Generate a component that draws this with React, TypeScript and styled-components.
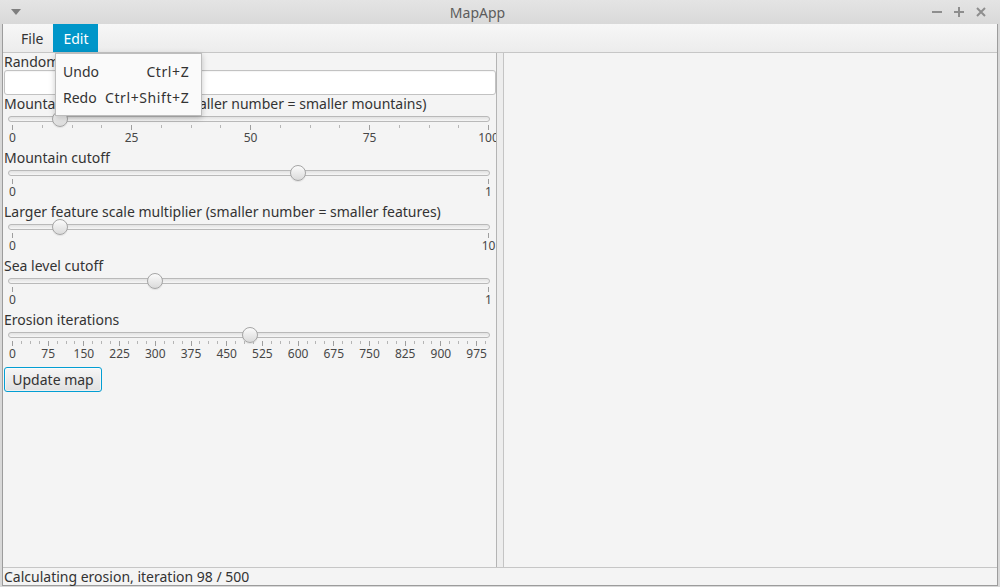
import React from "react";
import styled, { createGlobalStyle } from "styled-components";

const GlobalStyle = createGlobalStyle`
  html, body { margin: 0; padding: 0; }
  body {
    width: 1000px;
    height: 587px;
    overflow: hidden;
    background: #d4d4d4;
    font-family: "Noto Sans", "Open Sans", "DejaVu Sans", sans-serif;
    font-size: 14px;
    color: #333;
  }
`;

const Window = styled.div`
  width: 1000px;
  height: 587px;
  display: flex;
  flex-direction: column;
  position: relative;
  background: #d8d8d8;
`;

const TitleBar = styled.div`
  height: 24px;
  display: flex;
  align-items: center;
  background: linear-gradient(#e4e4e4, #d9d9d9);
  flex-shrink: 0;
`;

const TitleLeft = styled.div`
  width: 30px;
  display: flex;
  justify-content: center;
  padding-left: 2px;
  box-sizing: border-box;
`;

const TitleText = styled.div`
  flex: 1;
  text-align: center;
  font-size: 14px;
  color: #5c5c5c;
  padding-top: 1px;
`;

const TitleButtons = styled.div`
  width: 75px;
  display: flex;
  align-items: center;
  gap: 12px;
  padding-left: 7px;
  box-sizing: border-box;
`;

const Frame = styled.div`
  flex: 1;
  display: flex;
  flex-direction: column;
  margin: 0 2px 1px 2px;
  border: 1px solid #9c9c9c;
  border-top: none;
  background: #f4f4f4;
  min-height: 0;
`;

const MenuBar = styled.div`
  height: 28px;
  display: flex;
  align-items: stretch;
  padding-left: 8px;
  background: linear-gradient(#f7f7f7, #ececec);
  border-bottom: 1px solid #c6c6c6;
  flex-shrink: 0;
`;

const MenuItem = styled.div<{ $active?: boolean }>`
  display: flex;
  align-items: center;
  padding: 0 10px;
  font-size: 14px;
  color: ${(p) => (p.$active ? "#ffffff" : "#333")};
  background: ${(p) => (p.$active ? "#0096c9" : "transparent")};
`;

const Main = styled.div`
  flex: 1;
  display: flex;
  min-height: 0;
`;

const LeftPane = styled.div`
  width: 493px;
  padding-left: 1px;
  box-sizing: border-box;
  overflow: hidden;
  display: flex;
  flex-direction: column;
`;

const Divider = styled.div`
  width: 6px;
  border-left: 1px solid #b4b4b4;
  border-right: 1px solid #c4c4c4;
  background: #ededed;
`;

const RightPane = styled.div`
  flex: 1;
  background: #f4f4f4;
`;

const FieldLabel = styled.div<{ $tight?: boolean }>`
  height: ${(p) => (p.$tight ? 17 : 18)}px;
  line-height: ${(p) => (p.$tight ? 17 : 18)}px;
  font-size: 14px;
  color: #333;
  white-space: nowrap;
`;

const TextField = styled.div`
  height: 25px;
  box-sizing: border-box;
  background: #ffffff;
  border: 1px solid #c2c2c2;
  border-radius: 3px;
  box-shadow: inset 0 1px 1px rgba(0, 0, 0, 0.04);
`;

const SliderBlock = styled.div`
  display: flex;
  flex-direction: column;
  padding-bottom: 2px;
`;

const TrackRow = styled.div`
  height: 12px;
  position: relative;
  margin-left: 4px;
  width: 482px;
  display: flex;
  align-items: center;
`;

const Track = styled.div`
  width: 100%;
  height: 6px;
  box-sizing: border-box;
  border: 1px solid #b9b9b9;
  border-radius: 3px;
  background: linear-gradient(#e2e2e2, #f6f6f6);
`;

const Thumb = styled.div`
  position: absolute;
  top: 50%;
  width: 16px;
  height: 16px;
  box-sizing: border-box;
  margin-left: -8px;
  margin-top: -8px;
  border-radius: 50%;
  border: 1px solid #a5a5a5;
  background: linear-gradient(#fbfbfb, #dadada);
  box-shadow: 0 1px 1px rgba(0, 0, 0, 0.08);
`;

const Axis = styled.div`
  position: relative;
  margin-left: 8px;
  width: 478px;
  height: 22px;
`;

const TickSvg = styled.svg`
  position: absolute;
  left: 0;
  top: 0;
  overflow: visible;
`;

const TickLabel = styled.span`
  position: absolute;
  top: 5px;
  transform: translateX(-50%);
  font-size: 12px;
  line-height: 16px;
  color: #474747;
  white-space: nowrap;
`;

const Button = styled.div`
  margin-top: 2px;
  width: 98px;
  height: 25px;
  box-sizing: border-box;
  border: 1px solid #039ed3;
  border-radius: 3px;
  background: linear-gradient(#f6f6f6, #e0e0e0);
  box-shadow: inset 0 0 0 1px #ffffff80;
  display: flex;
  align-items: center;
  justify-content: center;
  font-size: 14px;
  color: #333;
`;

const StatusBar = styled.div`
  height: 17px;
  line-height: 17px;
  border-top: 1px solid #c6c6c6;
  padding-left: 1px;
  font-size: 14px;
  color: #333;
  flex-shrink: 0;
`;

const Popup = styled.div`
  position: absolute;
  left: 55px;
  top: 53px;
  width: 147px;
  box-sizing: border-box;
  padding: 5px 0 4px 0;
  background: #fafafa;
  border: 1px solid #bdbdbd;
  box-shadow: 0 2px 6px rgba(0, 0, 0, 0.22);
  display: grid;
  grid-template-columns: auto 1fr;
`;

const PopupLabel = styled.div`
  height: 26px;
  line-height: 26px;
  padding-left: 7px;
  font-size: 14px;
  color: #333;
`;

const PopupAccel = styled.div`
  height: 26px;
  line-height: 26px;
  padding-right: 13px;
  padding-left: 6px;
  text-align: right;
  font-size: 14px;
  letter-spacing: 0.6px;
  color: #333;
  white-space: nowrap;
`;

const AXIS_W = 476;

type SliderProps = {
  min: number;
  max: number;
  value: number;
  majorUnit: number;
  minorCount: number;
};

function Slider({ min, max, value, majorUnit, minorCount }: SliderProps) {
  const pos = (v: number) => ((v - min) / (max - min)) * AXIS_W;
  const majors: number[] = [];
  for (let v = min; v <= max + 1e-9; v += majorUnit) majors.push(v);
  const minors: number[] = [];
  const step = majorUnit / (minorCount + 1);
  for (let v = min; v < max - 1e-9; v += majorUnit) {
    for (let i = 1; i <= minorCount; i++) {
      const m = v + step * i;
      if (m < max - 1e-9) minors.push(m);
    }
  }
  const fmt = (v: number) => String(Math.round(v * 100) / 100);
  return (
    <>
      <TrackRow>
        <Track />
        <Thumb style={{ left: 4 + pos(value) }} />
      </TrackRow>
      <Axis>
        <TickSvg width={AXIS_W + 2} height={6}>
          {majors.map((m) => (
            <line key={"M" + m} x1={Math.round(pos(m)) + 0.5} x2={Math.round(pos(m)) + 0.5} y1={0} y2={5} stroke="#9e9e9e" strokeWidth={1} />
          ))}
          {minors.map((m) => (
            <line key={"m" + m} x1={Math.round(pos(m)) + 0.5} x2={Math.round(pos(m)) + 0.5} y1={0} y2={3} stroke="#b5b5b5" strokeWidth={1} />
          ))}
        </TickSvg>
        {majors.map((m) => (
          <TickLabel key={"L" + m} style={{ left: pos(m) + 0.5 }}>
            {fmt(m)}
          </TickLabel>
        ))}
      </Axis>
    </>
  );
}

export default function App() {
  return (
    <>
      <GlobalStyle />
      <Window>
        <TitleBar>
          <TitleLeft>
            <svg width="10" height="6" viewBox="0 0 10 6">
              <polygon points="0,0 10,0 5,6" fill="#7f7f7f" />
            </svg>
          </TitleLeft>
          <TitleText>MapApp</TitleText>
          <TitleButtons>
            <svg width="10" height="10" viewBox="0 0 10 10">
              <rect x="0" y="4" width="10" height="2" fill="#8e8e8e" />
            </svg>
            <svg width="10" height="10" viewBox="0 0 10 10">
              <rect x="0" y="4" width="10" height="2" fill="#8e8e8e" />
              <rect x="4" y="0" width="2" height="10" fill="#8e8e8e" />
            </svg>
            <svg width="10" height="10" viewBox="0 0 10 10">
              <path d="M1 1 L9 9 M9 1 L1 9" stroke="#8e8e8e" strokeWidth="2" />
            </svg>
          </TitleButtons>
        </TitleBar>
        <Frame>
          <MenuBar>
            <MenuItem>File</MenuItem>
            <MenuItem $active>Edit</MenuItem>
          </MenuBar>
          <Main>
            <LeftPane>
              <FieldLabel $tight>Random seed</FieldLabel>
              <TextField />
              <SliderBlock>
                <FieldLabel>Mountain scale multiplier (smaller number = smaller mountains)</FieldLabel>
                <Slider min={0} max={100} value={10} majorUnit={25} minorCount={3} />
              </SliderBlock>
              <SliderBlock>
                <FieldLabel>Mountain cutoff</FieldLabel>
                <Slider min={0} max={1} value={0.6} majorUnit={1} minorCount={0} />
              </SliderBlock>
              <SliderBlock>
                <FieldLabel>Larger feature scale multiplier (smaller number = smaller features)</FieldLabel>
                <Slider min={0} max={10} value={1} majorUnit={10} minorCount={0} />
              </SliderBlock>
              <SliderBlock>
                <FieldLabel>Sea level cutoff</FieldLabel>
                <Slider min={0} max={1} value={0.3} majorUnit={1} minorCount={0} />
              </SliderBlock>
              <SliderBlock>
                <FieldLabel>Erosion iterations</FieldLabel>
                <Slider min={0} max={1000} value={500} majorUnit={75} minorCount={3} />
              </SliderBlock>
              <Button>Update map</Button>
            </LeftPane>
            <Divider />
            <RightPane />
          </Main>
          <StatusBar>Calculating erosion, iteration 98 / 500</StatusBar>
        </Frame>
        <Popup>
          <PopupLabel>Undo</PopupLabel>
          <PopupAccel>Ctrl+Z</PopupAccel>
          <PopupLabel>Redo</PopupLabel>
          <PopupAccel>Ctrl+Shift+Z</PopupAccel>
        </Popup>
      </Window>
    </>
  );
}
